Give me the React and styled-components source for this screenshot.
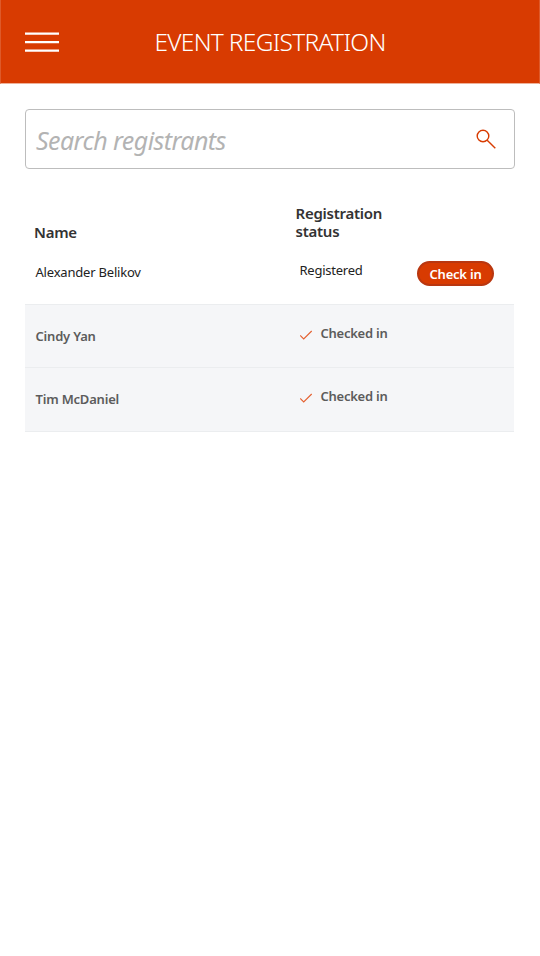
import React from 'react';
import styled, { createGlobalStyle } from 'styled-components';

const GlobalStyle = createGlobalStyle`
  * { box-sizing: border-box; }
  body { margin: 0; background: #fff; font-family: 'Noto Sans', 'Open Sans', sans-serif; }
`;

const Screen = styled.div`
  width: 540px;
  height: 956px;
  background: #fff;
  overflow: hidden;
`;

const Header = styled.header`
  display: grid;
  grid-template-columns: 120px 300px 120px;
  align-items: center;
  height: 84px;
  background: #d83b01;
  border: solid #de5a2a;
  border-width: 0 1px 1px;
  border-bottom-color: #eeb199;
`;

const MenuButton = styled.button`
  display: flex;
  padding: 0;
  margin: 1px 0 0 24px;
  width: 34px;
  border: 0;
  background: none;
`;

const Title = styled.h1`
  margin: 1px 0 0 -2px;
  color: #fff;
  font-weight: 300;
  font-size: 24.5px;
  line-height: 34px;
  text-align: center;
  white-space: nowrap;
  letter-spacing: -0.7px;
`;

const SearchBox = styled.div`
  display: flex;
  align-items: center;
  justify-content: space-between;
  width: 490px;
  height: 60px;
  margin: 25px 0 0 25px;
  padding: 0 17px 0 10px;
  border: 1px solid #bdbdbd;
  border-radius: 4px;
`;

const Placeholder = styled.span`
  color: #b3b3b3;
  font-size: 25px;
  line-height: 34px;
  font-style: italic;
  white-space: nowrap;
  padding-top: 1px;
  letter-spacing: -0.58px;
`;

const Table = styled.section`
  width: 489px;
  margin-left: 25px;
`;

const HeadRow = styled.div`
  display: grid;
  grid-template-columns: 261.5px 1fr;
  align-items: end;
  height: 72px;
  padding-left: 9px;
`;

const HeadCell = styled.div`
  width: 110px;
  padding-bottom: ${(p) => p.$lift || 0}px;
  color: #333;
  font-weight: 600;
  font-size: 15px;
  line-height: 18px;
  letter-spacing: -0.25px;
`;

const Row = styled.div`
  display: grid;
  grid-template-columns: 264px 118px 1fr;
  align-items: start;
  height: ${(p) => p.$height}px;
  padding: 19px 0 0 10.5px;
  background: ${(p) => (p.$muted ? '#f5f6f8' : '#fff')};
  border-bottom: 1px solid #ebedef;
  color: ${(p) => (p.$muted ? '#5c5c5c' : '#222')};
  font-weight: ${(p) => (p.$muted ? 600 : 400)};
  font-size: 13px;
  line-height: 18px;
  white-space: nowrap;
`;

const Name = styled.span`
  padding-top: 3px;
  letter-spacing: -0.2px;
`;

const Status = styled.span`
  display: flex;
  gap: 8px;
  padding-top: ${(p) => p.$top}px;
  letter-spacing: -0.25px;
`;

const CheckIcon = styled.svg`
  margin: 6px 0 0 0;
`;

const CheckInButton = styled.button`
  width: 77px;
  height: 25px;
  margin: 1px 0 0 -0.5px;
  padding: 1px 0 0;
  border: 2px solid #b93710;
  border-radius: 13px;
  background: #d83b01;
  color: #fff;
  font: 600 13px/20px 'Noto Sans', 'Open Sans', sans-serif;
  letter-spacing: -0.2px;
`;

const people = [
  { name: 'Alexander Belikov', checkedIn: false, height: 64 },
  { name: 'Cindy Yan', checkedIn: true, height: 63 },
  { name: 'Tim McDaniel', checkedIn: true, height: 64 },
];

export default function App() {
  return (
    <Screen>
      <GlobalStyle />
      <Header>
        <MenuButton aria-label="Menu">
          <svg width="34" height="20" viewBox="0 0 34 20" stroke="#fff" strokeWidth="2.2">
            <path d="M0 1.7H34M0 10.2H34M0 18.6H34" />
          </svg>
        </MenuButton>
        <Title>EVENT REGISTRATION</Title>
      </Header>
      <SearchBox>
        <Placeholder>Search registrants</Placeholder>
        <svg width="22" height="22" viewBox="0 0 22 22" fill="none" stroke="#d83b01" strokeWidth="1.4">
          <circle cx="8" cy="8" r="5.8" />
          <path d="M12.2 12.2L20.3 20.3" />
        </svg>
      </SearchBox>
      <Table>
        <HeadRow>
          <HeadCell>Name</HeadCell>
          <HeadCell $lift={1}>Registration status</HeadCell>
        </HeadRow>
        {people.map((p) => (
          <Row key={p.name} $muted={p.checkedIn} $height={p.height}>
            <Name>{p.name}</Name>
            <Status $top={p.checkedIn ? 0 : 1}>
              {p.checkedIn && (
                <CheckIcon width="13" height="11" viewBox="0 0 13 11" fill="none" stroke="#e4602f" strokeWidth="1.1">
                  <path d="M.2 5.5L3.7 9L11.7 1" />
                </CheckIcon>
              )}
              {p.checkedIn ? 'Checked in' : 'Registered'}
            </Status>
            {!p.checkedIn && <CheckInButton>Check in</CheckInButton>}
          </Row>
        ))}
      </Table>
    </Screen>
  );
}
